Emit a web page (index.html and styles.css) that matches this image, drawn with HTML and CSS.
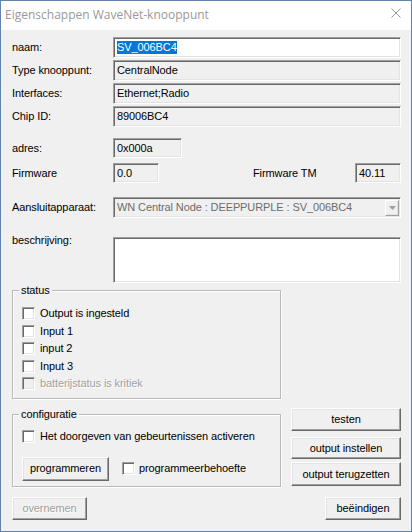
FILE: index.html
```html
<!DOCTYPE html>
<html lang="nl">
<head>
<meta charset="utf-8">
<title>Eigenschappen WaveNet-knooppunt</title>
<link rel="stylesheet" href="styles.css">
</head>
<body>
<div class="window">
  <div class="titlebar">
    <span class="title">Eigenschappen WaveNet-knooppunt</span>
    <svg class="close" width="10" height="10" viewBox="0 0 10 10"><path d="M0.5 0.5 L9.5 9.5 M9.5 0.5 L0.5 9.5" stroke="#9a9a9a" stroke-width="1" fill="none"/></svg>
  </div>
  <div class="client">
    <div class="row r-naam"><span class="lbl">naam:</span><div class="field edit grow"><span class="sel">SV_006BC4</span></div></div>
    <div class="row r-std"><span class="lbl">Type knooppunt:</span><div class="field ro grow">CentralNode</div></div>
    <div class="row r-std"><span class="lbl">Interfaces:</span><div class="field ro grow">Ethernet;Radio</div></div>
    <div class="row r-std"><span class="lbl">Chip ID:</span><div class="field ro grow">89006BC4</div></div>
    <div class="row r-adres"><span class="lbl">adres:</span><div class="field ro w-adres">0x000a</div></div>
    <div class="row r-fw"><span class="lbl">Firmware</span><div class="field ro w-fw">0.0</div><span class="lbl-tm">Firmware TM</span><div class="field ro w-fw push">40.11</div></div>
    <div class="row r-combo"><span class="lbl">Aansluitapparaat:</span><div class="field combo grow"><span class="combo-text">WN Central Node : DEEPPURPLE : SV_006BC4</span><span class="drop"><svg width="7" height="4" viewBox="0 0 7 4"><path d="M0 0 H7 L3.5 4 Z" fill="#a0a0a0"/></svg></span></div></div>
    <div class="row r-desc"><span class="lbl lbl-top">beschrijving:</span><div class="field edit grow"></div></div>

    <fieldset class="group g-status">
      <legend>status</legend>
      <div class="chk"><span class="box"></span><span>Output is ingesteld</span></div>
      <div class="chk"><span class="box"></span><span>Input 1</span></div>
      <div class="chk"><span class="box"></span><span>input 2</span></div>
      <div class="chk"><span class="box"></span><span>Input 3</span></div>
      <div class="chk disabled"><span class="box"></span><span>batterijstatus is kritiek</span></div>
    </fieldset>

    <div class="lower">
      <fieldset class="group g-config">
        <legend>configuratie</legend>
        <div class="chk"><span class="box"></span><span>Het doorgeven van gebeurtenissen activeren</span></div>
        <div class="prog-row">
          <button class="btn b-prog">programmeren</button>
          <div class="chk inline"><span class="box"></span><span>programmeerbehoefte</span></div>
        </div>
      </fieldset>
      <div class="side">
        <button class="btn b-test">testen</button>
        <button class="btn b-inst">output instellen</button>
        <button class="btn b-reset">output terugzetten</button>
      </div>
    </div>

    <div class="bottom">
      <button class="btn b-over disabled">overnemen</button>
      <button class="btn b-end">beëindigen</button>
    </div>
  </div>
</div>
</body>
</html>
```

FILE: styles.css
```css
* { box-sizing: border-box; }

html, body {
  margin: 0;
  padding: 0;
  background: #f0f0f0;
}

body {
  font-family: "Liberation Sans", Arial, sans-serif;
  font-size: 11px;
  line-height: 13px;
  letter-spacing: -0.1px;
  color: #000;
}

.window {
  width: 412px;
  height: 532px;
  border: 1px solid #5f84b0;
  background: #f0f0f0;
  display: flex;
  flex-direction: column;
  overflow: hidden;
}

.titlebar {
  height: 29px;
  flex: 0 0 29px;
  background: #fff;
  display: flex;
  align-items: center;
  padding-left: 4px;
  padding-bottom: 2px;
}

.title {
  font-family: "Open Sans", "Noto Sans", sans-serif;
  font-size: 12px;
  letter-spacing: 0;
  color: #999;
  line-height: 16px;
}

.close {
  margin-left: auto;
  margin-right: 10px;
  align-self: flex-start;
  margin-top: 7px;
}

.client {
  flex: 1;
  padding: 7px 10px 0 11px;
  display: flex;
  flex-direction: column;
}

.row {
  display: flex;
  align-items: center;
}

.lbl {
  width: 101px;
  flex: 0 0 101px;
}

.lbl-top {
  align-self: flex-start;
  margin-top: -3px;
}

.grow { flex: 1; }

.r-naam { height: 21px; }
.r-std { height: 21px; margin-top: 2px; }
.r-adres { height: 20px; margin-top: 11px; }
.r-fw { height: 20px; margin-top: 5px; }
.r-combo { height: 21px; margin-top: 14px; }
.r-desc { height: 46px; margin-top: 19px; align-items: stretch; }

.field {
  height: 100%;
  border: 1px solid;
  border-color: #a0a0a0 #fff #fff #a0a0a0;
  box-shadow: inset 1px 1px 0 #696969, inset -1px -1px 0 #e3e3e3;
  padding-left: 3px;
  display: flex;
  align-items: center;
  white-space: nowrap;
  overflow: hidden;
}

.edit { background: #fff; }
.ro { background: #f0f0f0; }

.sel {
  background: #0078d7;
  color: #fff;
  line-height: 13px;
  margin-top: -1px;
}

.w-adres { width: 69px; flex: 0 0 69px; }
.w-fw { width: 46px; flex: 0 0 46px; }

.lbl-tm { margin-left: 94px; }
.push { margin-left: auto; }

.combo {
  background: #f0f0f0;
  color: #6d6d6d;
  padding-right: 1px;
}

.combo-text { flex: 1; }

.drop {
  width: 14px;
  height: 16px;
  border: 1px solid;
  border-color: #fff #a0a0a0 #a0a0a0 #fff;
  box-shadow: inset -1px -1px 0 #e3e3e3;
  background: #f0f0f0;
  display: flex;
  align-items: center;
  justify-content: center;
}

/* group boxes */
.group {
  margin: 0;
  padding: 0 0 0 9px;
  border: 1px solid #b9b9b9;
  box-shadow: inset 1px 1px 0 #fff, 1px 1px 0 #fff;
  min-inline-size: 0;
  width: 269px;
}

.group legend {
  padding: 0 2px;
  margin-left: -3px;
  line-height: 13px;
  background: #f0f0f0;
}

.g-status {
  margin-top: 1px;
  height: 115px;
  padding-top: 8px;
}

.chk {
  display: flex;
  align-items: center;
  height: 17.5px;
}

.box {
  width: 13px;
  height: 13px;
  flex: 0 0 13px;
  background: #fff;
  border: 1px solid;
  border-color: #a0a0a0 #fff #fff #a0a0a0;
  box-shadow: inset 1px 1px 0 #696969, inset -1px -1px 0 #e3e3e3;
  margin-right: 5px;
}

.disabled,
.chk.disabled span {
  color: #a0a0a0;
  text-shadow: 1px 1px 0 #fff;
}

.chk.disabled .box { background: #f0f0f0; text-shadow: none; }

.lower {
  display: flex;
  margin-top: 9px;
}

.g-config {
  height: 79px;
  padding-top: 7px;
}

.prog-row {
  display: flex;
  align-items: center;
  margin-top: 11px;
}

.chk.inline { margin-left: 13px; margin-top: -1px; }
.chk.inline .box { margin-right: 4px; }

.side {
  margin-left: auto;
  width: 110px;
  display: flex;
  flex-direction: column;
}

.btn {
  font: inherit;
  font-size: 11px;
  line-height: 13px;
  letter-spacing: -0.1px;
  color: #000;
  background: #f0f0f0;
  border: 1px solid;
  border-color: #fff #696969 #696969 #fff;
  box-shadow: inset -1px -1px 0 #a0a0a0, inset 1px 1px 0 #e3e3e3;
  padding: 0;
  margin: 0;
  text-align: center;
  border-radius: 0;
}

.b-prog { width: 87px; height: 24px; }
.b-test { height: 23px; }
.b-inst { height: 22px; margin-top: 6px; }
.b-reset { height: 24px; margin-top: 3px; }

.bottom {
  display: flex;
  justify-content: space-between;
  margin-top: 10px;
}

.b-over { width: 75px; height: 23px; color: #a0a0a0; }
.b-end { width: 76px; height: 23px; }
```
